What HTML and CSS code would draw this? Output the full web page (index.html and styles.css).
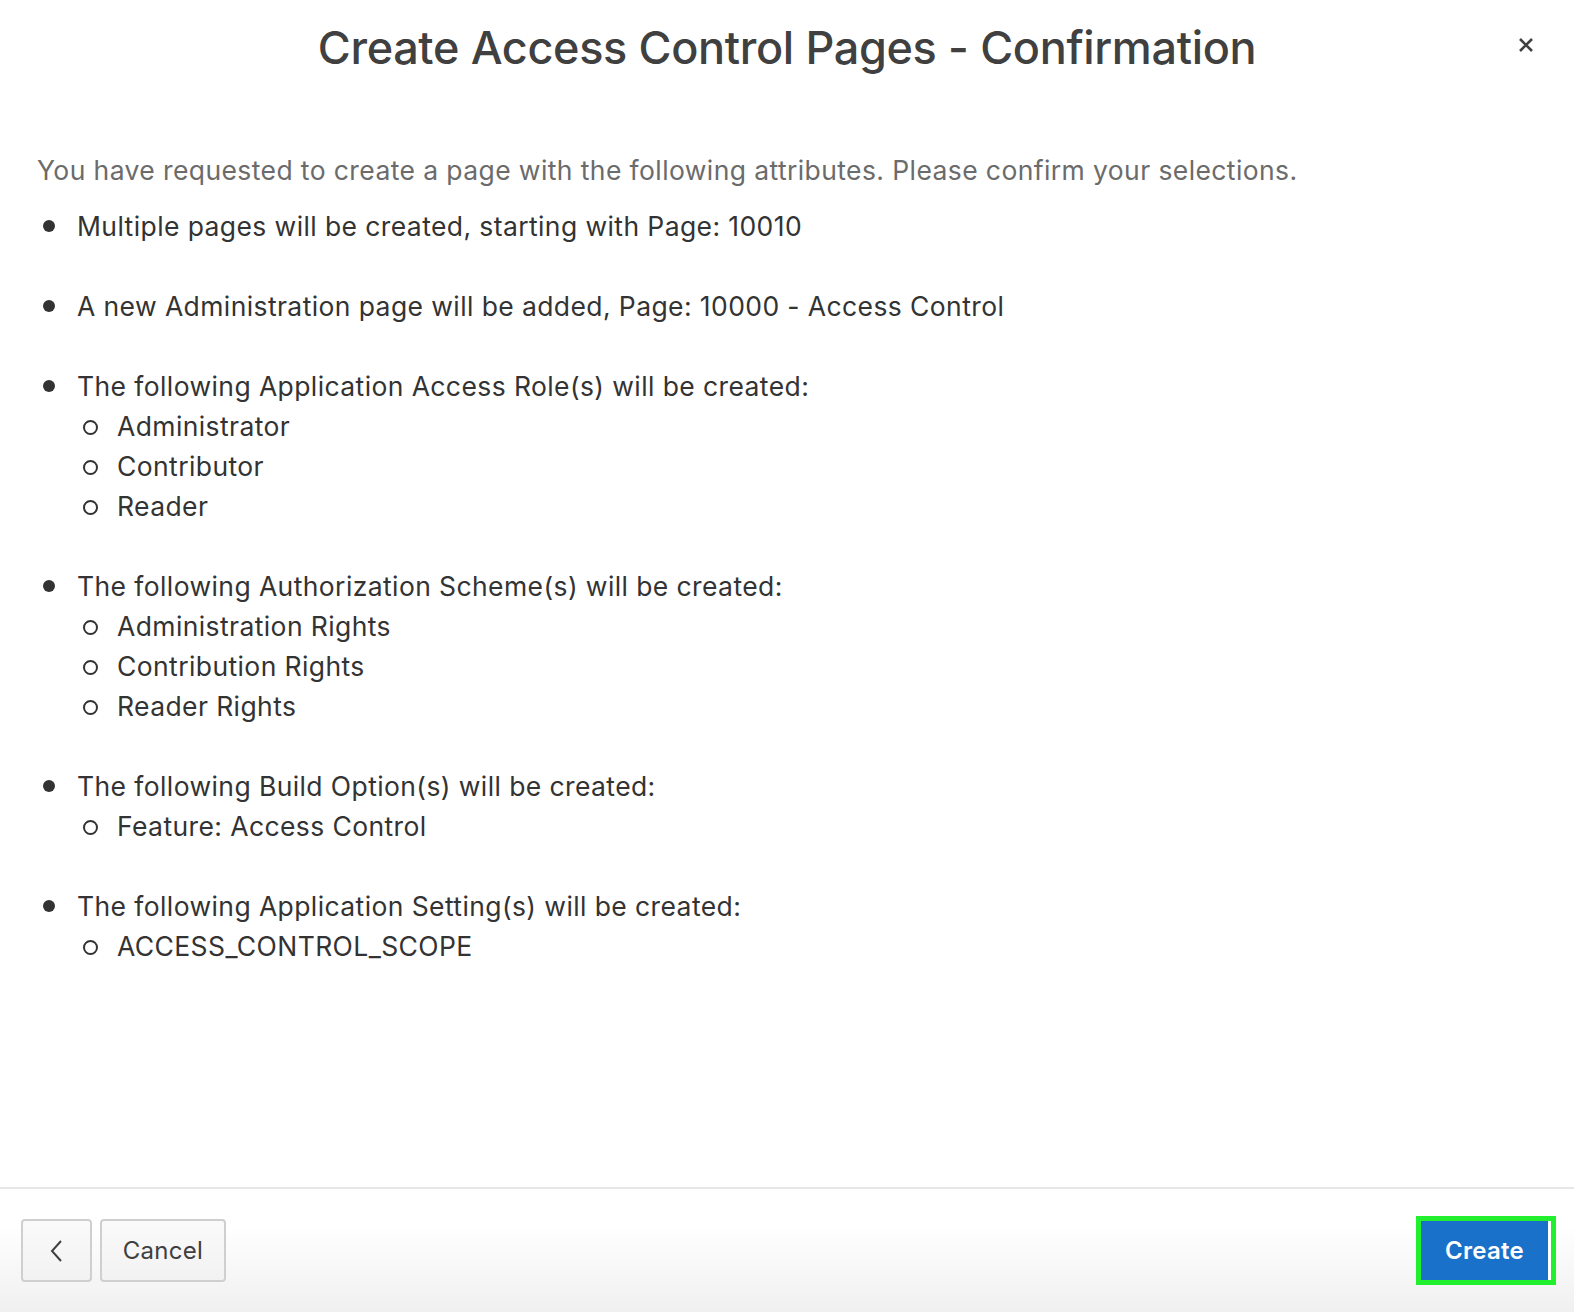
FILE: index.html
```html
<!DOCTYPE html>
<html>
<head>
<meta charset="utf-8">
<link rel="stylesheet" href="styles.css">
</head>
<body>
<div class="dialog">
  <header class="header">
    <h1 class="title">Create Access Control Pages - Confirmation</h1>
    <button class="close" aria-label="Close">
      <svg width="16" height="16" viewBox="0 0 16 16"><path d="M2 2 L14 14 M14 2 L2 14" stroke="#404040" stroke-width="2.6" stroke-linecap="butt" fill="none"/></svg>
    </button>
  </header>
  <main class="content">
    <p class="intro">You have requested to create a page with the following attributes. Please confirm your selections.</p>
    <ul class="list">
      <li><span>Multiple pages will be created, starting with Page: 10010</span></li>
      <li><span>A new Administration page will be added, Page: 10000 - Access Control</span></li>
      <li><span>The following Application Access Role(s) will be created:</span>
        <ul class="sub">
          <li><span>Administrator</span></li>
          <li><span>Contributor</span></li>
          <li><span>Reader</span></li>
        </ul>
      </li>
      <li><span>The following Authorization Scheme(s) will be created:</span>
        <ul class="sub">
          <li><span>Administration Rights</span></li>
          <li><span>Contribution Rights</span></li>
          <li><span>Reader Rights</span></li>
        </ul>
      </li>
      <li><span>The following Build Option(s) will be created:</span>
        <ul class="sub">
          <li><span>Feature: Access Control</span></li>
        </ul>
      </li>
      <li><span>The following Application Setting(s) will be created:</span>
        <ul class="sub">
          <li><span>ACCESS_CONTROL_SCOPE</span></li>
        </ul>
      </li>
    </ul>
  </main>
  <footer class="footer">
    <div class="left">
      <button class="btn btn-back" aria-label="Previous">
        <svg width="14" height="24" viewBox="0 0 14 24"><path d="M11 2 L2 12 L11 22" stroke="#404040" stroke-width="2" fill="none"/></svg>
      </button>
      <button class="btn btn-cancel">Cancel</button>
    </div>
    <div class="highlight">
      <button class="btn-create">Create</button>
    </div>
  </footer>
</div>
</body>
</html>
```
FILE: styles.css
```css
* { box-sizing: border-box; }
html, body { margin: 0; padding: 0; }
body {
  font-family: Inter, "Noto Sans", "Liberation Sans", sans-serif;
  background: #fff;
  color: #333;
}
.dialog {
  width: 1574px;
  height: 1312px;
  display: flex;
  flex-direction: column;
}
.header {
  position: relative;
  height: 96px;
  display: flex;
  align-items: center;
  justify-content: center;
}
.title {
  margin: 0;
  font-size: 45px;
  font-weight: 500;
  color: #404040;
  letter-spacing: -0.35px;
  line-height: 56px;
}
.close {
  position: absolute;
  right: 40px;
  top: 37px;
  width: 16px;
  height: 16px;
  padding: 0;
  border: 0;
  background: none;
  display: flex;
}
.content {
  flex: 1;
  padding: 54px 37px 0 37px;
}
.intro {
  margin: 0 0 16px 0;
  font-size: 26.5px;
  letter-spacing: 0.4px;
  line-height: 40px;
  color: #6b6b6b;
}
.list, .sub {
  list-style: none;
  margin: 0;
  padding: 0;
}
.list > li {
  display: grid;
  grid-template-columns: 40px 1fr;
  font-size: 26.5px;
  letter-spacing: 0.4px;
  line-height: 40px;
  color: #333;
  margin-bottom: 40px;
}
.list > li::before {
  content: "";
  width: 12px;
  height: 12px;
  border-radius: 50%;
  background: #333;
  margin: 14px 0 0 6px;
}
.list > li > .sub {
  grid-column: 2;
}
.sub > li {
  display: grid;
  grid-template-columns: 40px 1fr;
  margin: 0;
}
.sub > li::before {
  content: "";
  width: 11px;
  height: 11px;
  border-radius: 50%;
  border: 2px solid #333;
  margin: 14px 0 0 6px;
}
.footer {
  height: 125px;
  border-top: 2px solid #e6e6e6;
  background: linear-gradient(#fff 0%, #fff 30%, #f0f0f0 100%);
  display: flex;
  align-items: center;
  justify-content: space-between;
  padding: 0 18px 0 21px;
}
.left {
  display: flex;
  gap: 8px;
}
.btn {
  height: 63px;
  border: 2px solid #cfcfcf;
  border-radius: 4px;
  background: linear-gradient(#fafafa, #f2f2f2);
  font-family: inherit;
  color: #404040;
  font-size: 24px;
  letter-spacing: 0.3px;
  display: flex;
  align-items: center;
  justify-content: center;
  padding: 0;
}
.btn-back { width: 71px; }
.btn-cancel { width: 126px; }
.highlight {
  border: 5px solid #22f02f;
  padding: 0 3px 0 0;
  background: #fff;
  display: flex;
}
.btn-create {
  width: 127px;
  height: 59px;
  border: 0;
  background: #1a71c9;
  color: #fff;
  font-family: inherit;
  font-size: 24px;
  font-weight: 600;
  letter-spacing: 0.3px;
  padding: 0;
}
```
